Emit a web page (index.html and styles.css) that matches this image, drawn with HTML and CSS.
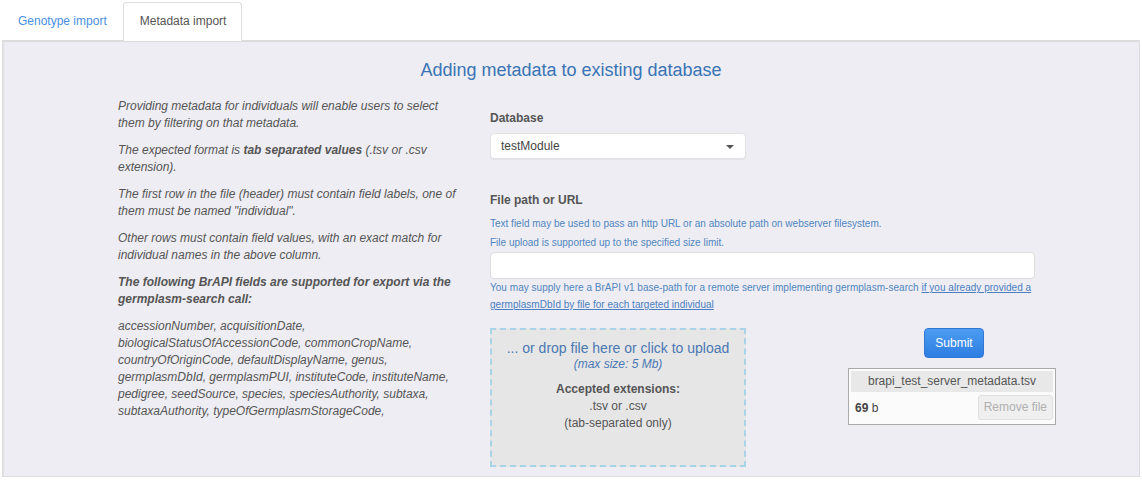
FILE: index.html
```html
<!DOCTYPE html>
<html>
<head>
<meta charset="utf-8">
<link rel="stylesheet" href="styles.css">
</head>
<body>
<ul class="tabs">
  <li class="tab"><a class="tab-link">Genotype import</a></li>
  <li class="tab active"><a class="tab-link">Metadata import</a></li>
</ul>
<div class="panel">
  <h2 class="title">Adding metadata to existing database</h2>
  <div class="row">
    <div class="left">
      <p>Providing metadata for individuals will enable users to select them by filtering on that metadata.</p>
      <p>The expected format is <b>tab separated values</b> (.tsv or .csv extension).</p>
      <p>The first row in the file (header) must contain field labels, one of them must be named "individual".</p>
      <p>Other rows must contain field values, with an exact match for individual names in the above column.</p>
      <p><b>The following BrAPI fields are supported for export via the germplasm-search call:</b></p>
      <p>accessionNumber, acquisitionDate, biologicalStatusOfAccessionCode, commonCropName, countryOfOriginCode, defaultDisplayName, genus, germplasmDbId, germplasmPUI, instituteCode, instituteName, pedigree, seedSource, species, speciesAuthority, subtaxa, subtaxaAuthority, typeOfGermplasmStorageCode,</p>
    </div>
    <div class="right">
      <div class="label">Database</div>
      <div class="select"><span>testModule</span><span class="caret"></span></div>
      <div class="label label-file">File path or URL</div>
      <div class="help">Text field may be used to pass an http URL or an absolute path on webserver filesystem.</div>
      <div class="help help2">File upload is supported up to the specified size limit.</div>
      <div class="input"></div>
      <div class="help help3">You may supply here a BrAPI v1 base-path for a remote server implementing germplasm-search <a class="help-link">if you already provided a germplasmDbId by file for each targeted individual</a></div>
      <div class="bottom">
        <div class="dropzone">
          <div class="dz-main">... or drop file here or click to upload</div>
          <div class="dz-size">(max size: 5 Mb)</div>
          <div class="dz-ext"><b>Accepted extensions:</b><br>.tsv or .csv<br>(tab-separated only)</div>
        </div>
        <div class="side">
          <button class="submit">Submit</button>
          <div class="preview">
            <div class="preview-name">brapi_test_server_metadata.tsv</div>
            <div class="preview-row">
              <span><b>69</b> b</span>
              <span class="remove">Remove file</span>
            </div>
          </div>
        </div>
      </div>
    </div>
  </div>
</div>
</body>
</html>
```

FILE: styles.css
```css
* { box-sizing: border-box; }
html, body { margin: 0; padding: 0; background: #fff; }
body {
  font-family: "Liberation Sans", Arial, sans-serif;
  color: #555;
  padding: 2px 2px 0 2px;
  width: 1142px;
}
.tabs {
  list-style: none;
  margin: 0;
  padding: 0;
  display: flex;
  height: 38px;
}
.tab { margin-right: 0; }
.tab-link {
  display: block;
  padding: 9px 15px 10px 15px;
  line-height: 19px;
  font-size: 12px;
  color: #4a90e2;
  border: 1px solid transparent;
  border-bottom: none;
  border-radius: 4px 4px 0 0;
  height: 39px;
}
.tab.active .tab-link {
  color: #555;
  background: #fff;
  border-color: #ddd;
  padding-left: 16px;
  padding-right: 15px;
  position: relative;
}
.panel {
  background: #eeedf3;
  border: 1px solid #ddd;
  border-top: 2px solid #dcdcdc;
  box-shadow: inset 1px 0 1px rgba(0,0,0,0.06);
  height: 437px;
}
.title {
  margin: 0;
  padding-top: 17px;
  text-align: center;
  font-weight: normal;
  font-size: 18px;
  line-height: 22px;
  color: #3a74b5;
}
.row {
  display: flex;
  padding-left: 115px;
  margin-top: 17px;
}
.left {
  width: 345px;
  flex-shrink: 0;
  font-size: 12px;
  line-height: 17px;
  font-style: italic;
  color: #555;
}
.left p { margin: 0 0 10px 0; }
.left b { color: #555; }
.right {
  margin-left: 27px;
  width: 545px;
  flex-shrink: 0;
  padding-top: 12px;
}
.label {
  font-size: 12px;
  font-weight: bold;
  line-height: 17px;
  color: #555;
}
.select {
  margin-top: 6px;
  width: 256px;
  height: 26px;
  background: #fff;
  border: 1px solid #e2e2e2;
  border-radius: 4px;
  box-shadow: 0 1px 1px rgba(0,0,0,0.05);
  display: flex;
  align-items: center;
  justify-content: space-between;
  padding: 0 11px 0 10px;
  font-size: 12px;
  color: #444;
}
.caret {
  width: 0; height: 0;
  border-left: 4px solid transparent;
  border-right: 4px solid transparent;
  border-top: 4px solid #555;
  margin-top: 2px;
}
.label-file { margin-top: 33px; }
.help {
  font-size: 10px;
  line-height: 17px;
  color: #4f86c0;
  margin-top: 6px;
}
.help2 { margin-top: 2px; }
.input {
  margin-top: 1px;
  width: 545px;
  height: 27px;
  background: #fff;
  border: 1px solid #ddd;
  border-radius: 4px;
}
.help3 { margin-top: 0; letter-spacing: 0.03px; }
.help-link { text-decoration: underline; color: #4a80c0; }
.bottom {
  display: flex;
  margin-top: 15px;
}
.dropzone {
  width: 256px;
  flex-shrink: 0;
  height: 139px;
  background: #e6e6e7;
  border: 2px dashed #a9d4e8;
  text-align: center;
  padding-top: 9px;
}
.dz-main { font-size: 14px; line-height: 18px; color: #4a78b3; }
.dz-size { font-size: 12px; line-height: 15px; font-style: italic; color: #4a78b3; }
.dz-ext { font-size: 12px; line-height: 17px; color: #555; margin-top: 9px; }
.side {
  margin-left: 102px;
  width: 208px;
  flex-shrink: 0;
  display: flex;
  flex-direction: column;
  align-items: center;
}
.submit {
  margin-left: 4px;
  width: 60px;
  height: 30px;
  font-family: "Liberation Sans", Arial, sans-serif;
  font-size: 12px;
  color: #fff;
  background: linear-gradient(#4c9cf1, #2d7ee2);
  border: 1px solid #2f78d6;
  border-radius: 4px;
  padding: 0;
}
.preview {
  margin-top: 10px;
  width: 208px;
  border: 1px solid #aaa;
  background: #fbfbfb;
  padding: 2px;
}
.preview-name {
  background: #e8e8e8;
  text-align: center;
  font-size: 12px;
  line-height: 21px;
  color: #555;
}
.preview-row {
  display: flex;
  justify-content: space-between;
  align-items: center;
  font-size: 12px;
  color: #444;
  padding: 3px 0 2px 4px;
}
.remove {
  background: #efefef;
  border: 1px solid #e0e0e0;
  border-radius: 3px;
  color: #b0b0b0;
  padding: 0 5px;
  line-height: 23px;
  font-size: 12px;
}
```
